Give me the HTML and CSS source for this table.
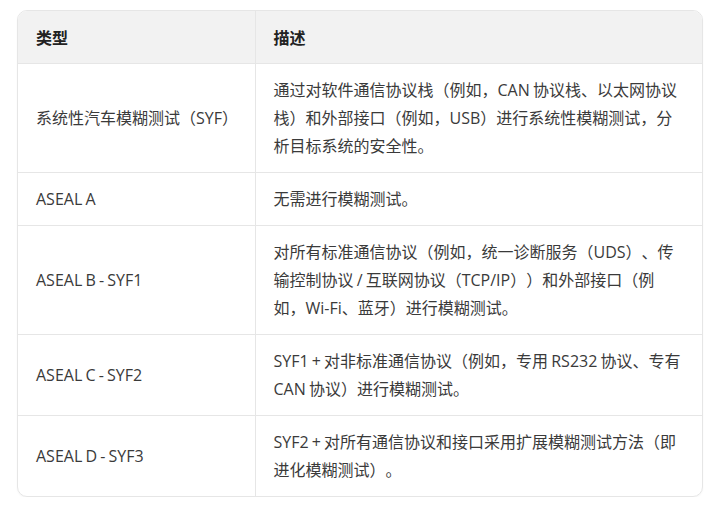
FILE: index.html
```html
<!DOCTYPE html>
<html lang="zh-CN">
<head>
<meta charset="utf-8">
<link rel="stylesheet" href="styles.css">
</head>
<body>
<div class="wrap">
  <table class="tbl">
    <colgroup><col class="c1"><col class="c2"></colgroup>
    <thead>
      <tr><th>类型</th><th>描述</th></tr>
    </thead>
    <tbody>
      <tr><td>系统性汽车模糊测试（SYF）</td><td>通过对软件通信协议栈（例如，CAN 协议栈、以太网协议栈）和外部接口（例如，USB）进行系统性模糊测试，分析目标系统的安全性。</td></tr>
      <tr><td>ASEAL A</td><td>无需进行模糊测试。</td></tr>
      <tr><td>ASEAL B - SYF1</td><td>对所有标准通信协议（例如，统一诊断服务（UDS）、传输控制协议 / 互联网协议（TCP/IP））和外部接口（例如，Wi-Fi、蓝牙）进行模糊测试。</td></tr>
      <tr><td>ASEAL C - SYF2</td><td>SYF1 + 对非标准通信协议（例如，专用 RS232 协议、专有 CAN 协议）进行模糊测试。</td></tr>
      <tr><td>ASEAL D - SYF3</td><td>SYF2 + 对所有通信协议和接口采用扩展模糊测试方法（即进化模糊测试）。</td></tr>
    </tbody>
  </table>
</div>
</body>
</html>
```
FILE: styles.css
```css
html, body {
  margin: 0;
  padding: 0;
  background: #ffffff;
}
body {
  padding: 10px 0 0 17px;
  font-family: "Open Sans", "Noto Sans CJK SC", sans-serif;
  font-size: 16px;
  color: #3a3a3a;
  text-spacing-trim: space-all;
}
.wrap {
  width: 686px;
  box-sizing: border-box;
  border: 1px solid #e6e6e6;
  border-radius: 10px;
  overflow: hidden;
  box-shadow: 0 1px 2px rgba(0,0,0,0.04);
}
.tbl {
  width: 100%;
  border-collapse: collapse;
  table-layout: fixed;
}
.c1 { width: 237px; }
.c2 { width: auto; }
.tbl th, .tbl td {
  padding: 12px 16px 12px 18px;
  line-height: 28px;
  text-align: left;
  vertical-align: middle;
  border-left: 1px solid #e6e6e6;
  border-top: 1px solid #e6e6e6;
  line-break: strict;
  word-spacing: -1px;
}
.tbl th:first-child, .tbl td:first-child {
  border-left: none;
  white-space: nowrap;
}
.tbl thead th {
  border-top: none;
  background: #f2f2f2;
  font-family: "Noto Sans CJK SC", sans-serif;
  font-weight: 700;
  color: #222222;
}
```
